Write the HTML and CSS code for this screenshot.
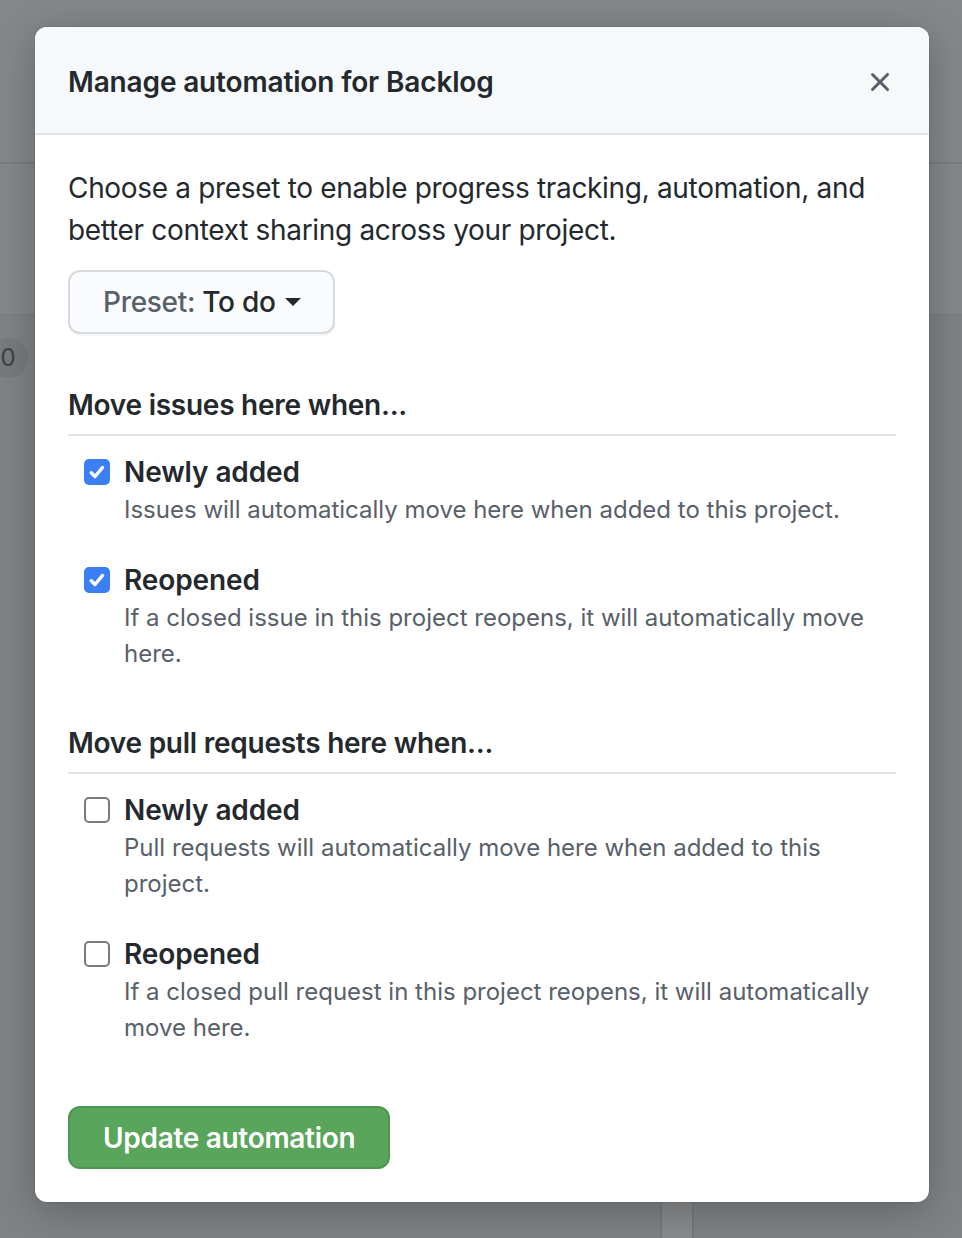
FILE: index.html
```html
<!DOCTYPE html>
<html>
  <head>
    <title>Manage automation</title>
    <link rel="stylesheet" href="styles.css">
  </head>
  <body>
    <div class="page">
      <div class="page-head"></div>
      <div class="page-nav"></div>
      <div class="page-board">
        <span class="counter">0</span>
        <div class="col-gap"></div>
      </div>
    </div>

    <div class="overlay">
      <div class="dialog">
        <div class="dialog-header">
          <h1 class="dialog-title">Manage automation for Backlog</h1>
          <button class="close-btn" aria-label="Close">
            <svg width="32" height="32" viewBox="0 0 16 16"><path fill="#586069" d="M3.72 3.72a.75.75 0 0 1 1.06 0L8 6.94l3.22-3.22a.75.75 0 1 1 1.06 1.06L9.06 8l3.22 3.22a.75.75 0 1 1-1.06 1.06L8 9.06l-3.22 3.22a.75.75 0 0 1-1.06-1.06L6.94 8 3.72 4.780a.75.75 0 0 1 0-1.06Z"/></svg>
          </button>
        </div>
        <div class="dialog-body">
          <p class="intro">Choose a preset to enable progress tracking, automation, and better context sharing across your project.</p>
          <button class="preset-btn"><span class="muted">Preset:</span>&nbsp;To do<span class="caret"></span></button>

          <h2 class="section-title">Move issues here when...</h2>
          <div class="options">
            <div class="option">
              <span class="check checked"><svg width="20" height="20" viewBox="0 0 16 16"><path fill="none" stroke="#fff" stroke-width="2.8" stroke-linecap="round" stroke-linejoin="round" d="M3.4 8.6l3 3 6-7.2"/></svg></span>
              <div>
                <div class="option-label">Newly added</div>
                <div class="option-note">Issues will automatically move here when added to this project.</div>
              </div>
            </div>
            <div class="option">
              <span class="check checked"><svg width="20" height="20" viewBox="0 0 16 16"><path fill="none" stroke="#fff" stroke-width="2.8" stroke-linecap="round" stroke-linejoin="round" d="M3.4 8.6l3 3 6-7.2"/></svg></span>
              <div>
                <div class="option-label">Reopened</div>
                <div class="option-note">If a closed issue in this project reopens, it will automatically move here.</div>
              </div>
            </div>
          </div>

          <h2 class="section-title">Move pull requests here when...</h2>
          <div class="options">
            <div class="option">
              <span class="check"></span>
              <div>
                <div class="option-label">Newly added</div>
                <div class="option-note">Pull requests will automatically move here when added to this project.</div>
              </div>
            </div>
            <div class="option">
              <span class="check"></span>
              <div>
                <div class="option-label">Reopened</div>
                <div class="option-note">If a closed pull request in this project reopens, it will automatically move here.</div>
              </div>
            </div>
          </div>

          <button class="primary-btn">Update automation</button>
        </div>
      </div>
    </div>
  </body>
</html>
```

FILE: styles.css
```css
body {
  margin: 0;
  background: #85878a;
  font-family: Inter, "Liberation Sans", sans-serif;
  color: #24292e;
}

/* page behind the overlay */
.page {
  height: 1238px;
  overflow: hidden;
}
.page-head {
  height: 162px;
  border-bottom: 2px solid #7b7d80;
}
.page-nav {
  height: 150px;
  border-bottom: 2px solid #7b7d80;
}
.page-board {
  display: flex;
  flex-direction: column;
  height: 922px;
  background: #7f8386;
}
.counter {
  margin: 22px 0 0 -12px;
  width: 40px;
  height: 40px;
  border-radius: 50%;
  background: #777b7e;
  color: #3d4145;
  font-size: 24px;
  line-height: 40px;
  text-align: center;
}
.col-gap {
  margin: auto 0 0 660px;
  width: 30px;
  height: 36px;
  border-left: 2px solid #777a7d;
  border-right: 2px solid #777a7d;
  background: #888a8c;
}

.overlay {
  position: absolute;
  top: 27px;
  left: 35px;
}

.dialog {
  width: 894px;
  background: #fff;
  border-radius: 12px;
  box-shadow: 0 8px 40px rgba(0, 0, 0, 0.25), 0 0 0 1px rgba(0, 0, 0, 0.06);
  overflow: hidden;
}

.dialog-header {
  display: flex;
  align-items: center;
  justify-content: space-between;
  box-sizing: border-box;
  height: 108px;
  padding: 4px 33px 0 33px;
  background: #f6f8fa;
  border-bottom: 2px solid #e1e4e8;
}
.dialog-title {
  margin: 0;
  font-size: 28px;
  font-weight: 600;
  letter-spacing: -0.15px;
}
.close-btn {
  display: flex;
  padding: 0;
  border: none;
  background: none;
}

.dialog-body {
  padding: 32px 33px 33px;
}

.intro {
  margin: 0 0 19px;
  font-size: 28px;
  line-height: 42px;
  letter-spacing: -0.32px;
}

.preset-btn {
  display: flex;
  align-items: center;
  height: 64px;
  padding: 0 32px 0 33px;
  border: 2px solid #d6d9dd;
  border-radius: 12px;
  background: #fafbfc;
  box-shadow: 0 2px 0 rgba(27, 31, 35, 0.04);
  font-family: inherit;
  font-size: 28px;
  font-weight: 500;
  letter-spacing: -0.3px;
  color: #24292e;
}
.muted {
  color: #586069;
}
.caret {
  margin-left: 9px;
  border-left: 8px solid transparent;
  border-right: 8px solid transparent;
  border-top: 8px solid #24292e;
}

.section-title {
  margin: 50px 0 0;
  padding-bottom: 8px;
  border-bottom: 2px solid #e1e4e8;
  font-size: 28px;
  line-height: 42px;
  font-weight: 600;
  letter-spacing: -0.25px;
}

.options {
  display: flex;
  flex-direction: column;
  gap: 31px;
  padding: 15px 0 0 16px;
}
.option {
  display: flex;
  gap: 14px;
}
.check {
  flex: none;
  display: flex;
  align-items: center;
  justify-content: center;
  box-sizing: border-box;
  width: 26px;
  height: 26px;
  margin-top: 8px;
  border: 2px solid #7a7a7a;
  border-radius: 5px;
  background: #fff;
}
.check.checked {
  border: none;
  background: #3b7ff4;
}
.option-label {
  font-size: 28px;
  line-height: 42px;
  font-weight: 600;
  letter-spacing: -0.1px;
}
.option-note {
  margin-top: -1px;
  font-size: 24px;
  line-height: 36px;
  color: #586069;
}

.primary-btn {
  display: block;
  margin-top: 60px;
  height: 63px;
  padding: 0 33px;
  border: 2px solid #4f9652;
  border-radius: 12px;
  background: #58a55b;
  font-family: inherit;
  font-size: 28px;
  font-weight: 600;
  letter-spacing: -0.3px;
  color: #fff;
}
```
